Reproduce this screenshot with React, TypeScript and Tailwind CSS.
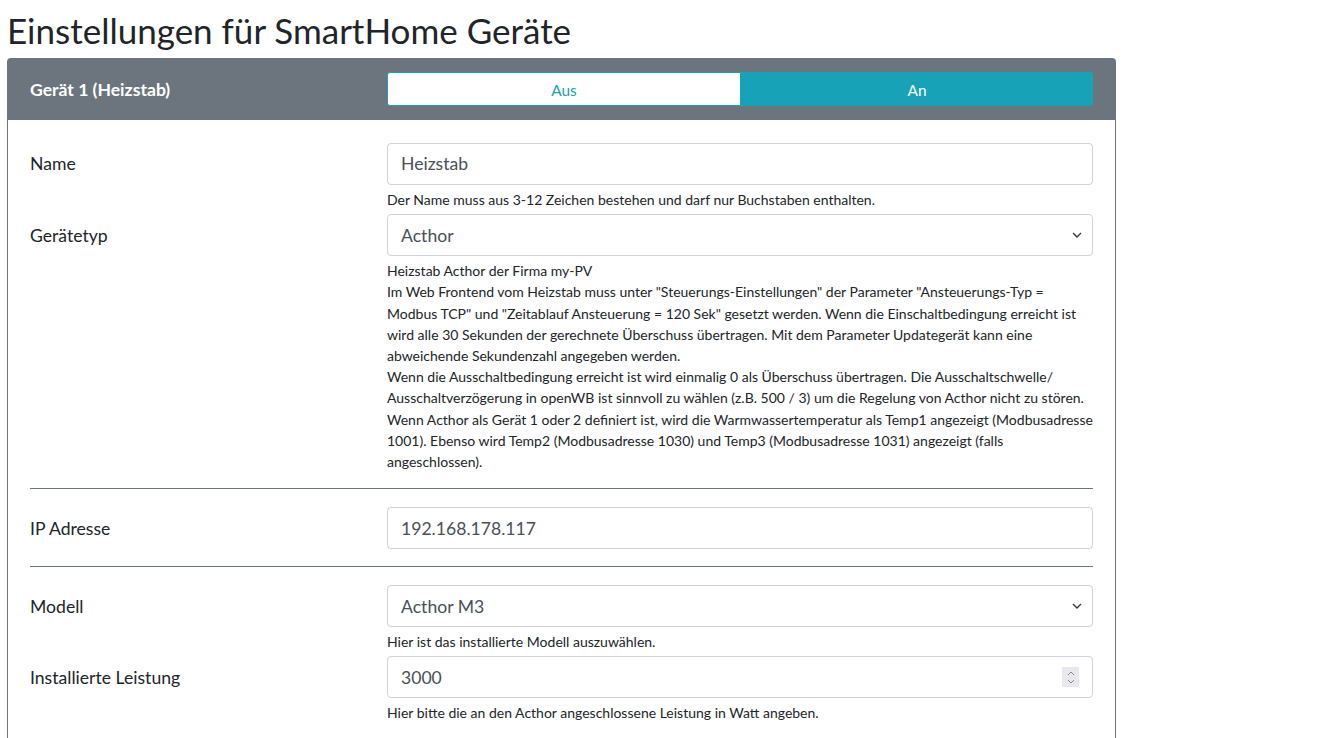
import React from "react";

const helpLines = [
  "Heizstab Acthor der Firma my-PV",
  'Im Web Frontend vom Heizstab muss unter "Steuerungs-Einstellungen" der Parameter "Ansteuerungs-Typ =',
  'Modbus TCP" und "Zeitablauf Ansteuerung = 120 Sek" gesetzt werden. Wenn die Einschaltbedingung erreicht ist',
  "wird alle 30 Sekunden der gerechnete Überschuss übertragen. Mit dem Parameter Updategerät kann eine",
  "abweichende Sekundenzahl angegeben werden.",
  "Wenn die Ausschaltbedingung erreicht ist wird einmalig 0 als Überschuss übertragen. Die Ausschaltschwelle/",
  "Ausschaltverzögerung in openWB ist sinnvoll zu wählen (z.B. 500 / 3) um die Regelung von Acthor nicht zu stören.",
  "Wenn Acthor als Gerät 1 oder 2 definiert ist, wird die Warmwassertemperatur als Temp1 angezeigt (Modbusadresse",
  "1001). Ebenso wird Temp2 (Modbusadresse 1030) und Temp3 (Modbusadresse 1031) angezeigt (falls",
  "angeschlossen).",
];

function Chevron() {
  return (
    <svg width="10" height="6" viewBox="0 0 10 6" className="shrink-0">
      <path d="M1 1l4 4 4-4" fill="none" stroke="#343a40" strokeWidth="1.4" />
    </svg>
  );
}

function Field({ value, kind }: { value: string; kind?: "select" | "number" }) {
  return (
    <div className="h-[42px] flex items-center justify-between rounded-[4px] border border-[#ced4da] bg-white pl-[13px] pr-[10px] text-[17.6px] text-[#495057]">
      <span className="pt-[1px]">{value}</span>
      {kind === "select" && <Chevron />}
      {kind === "number" && (
        <div className="w-[17px] h-[20px] mr-[3px] bg-[#e9e9ed] flex flex-col items-center justify-center gap-[3px]">
          <svg width="8" height="5" viewBox="0 0 8 5">
            <path d="M1 4l3-3 3 3" fill="none" stroke="#8a8a8a" strokeWidth="1" />
          </svg>
          <svg width="8" height="5" viewBox="0 0 8 5">
            <path d="M1 1l3 3 3-3" fill="none" stroke="#8a8a8a" strokeWidth="1" />
          </svg>
        </div>
      )}
    </div>
  );
}

function Row({
  label,
  children,
}: {
  label: string;
  children: React.ReactNode;
}) {
  return (
    <div className="grid grid-cols-[357px_1fr]">
      <div className="h-[42px] pt-[1px] flex items-center text-[17.6px] text-[#212529]">{label}</div>
      <div>{children}</div>
    </div>
  );
}

function Help({ children }: { children: React.ReactNode }) {
  return <div className="mt-[4px] text-[14px] leading-[21.2px] text-[#212529]">{children}</div>;
}

export default function App() {
  return (
    <div className="min-h-screen bg-white font-['Lato','Liberation_Sans',sans-serif] pl-[7px]">
      <h2 className="pt-[9px] text-[35px] leading-[42px] mb-[7px] text-[#212529] font-normal">
        Einstellungen für SmartHome Geräte
      </h2>
      <div className="w-[1109px] rounded-t-[4px] border border-b-0 border-[#6c757d]">
        {/* Header */}
        <div className="bg-[#6c757d] px-[22px] pt-[13px] pb-[14px] grid grid-cols-[357px_1fr] items-center">
          <span className="pt-[3px] text-white font-bold text-[17.6px]">Gerät 1 (Heizstab)</span>
          <div className="flex h-[34px] text-[15.4px]">
            <button className="flex-1 pt-[3px] bg-white border border-[#17a2b8] rounded-l-[3px] text-[#17a2b8]">
              Aus
            </button>
            <button className="flex-1 pt-[3px] bg-[#17a2b8] rounded-r-[3px] text-white">An</button>
          </div>
        </div>

        {/* Body */}
        <div className="px-[22px] pt-[23px] pb-[20px]">
          <Row label="Name">
            <Field value="Heizstab" />
            <Help>Der Name muss aus 3-12 Zeichen bestehen und darf nur Buchstaben enthalten.</Help>
          </Row>
          <div className="mt-[4px]">
            <Row label="Gerätetyp">
              <Field value="Acthor" kind="select" />
              <Help>
                {helpLines.map((l, i) => (
                  <div key={i} className="whitespace-nowrap">{l}</div>
                ))}
              </Help>
            </Row>
          </div>
          <hr className="mt-[16px] mb-[18px] border-t border-[#6c757d]" />
          <Row label="IP Adresse">
            <Field value="192.168.178.117" />
          </Row>
          <hr className="mt-[17px] mb-[18px] border-t border-[#6c757d]" />
          <Row label="Modell">
            <Field value="Acthor M3" kind="select" />
            <Help>Hier ist das installierte Modell auszuwählen.</Help>
          </Row>
          <div className="mt-[4px]">
            <Row label="Installierte Leistung">
              <Field value="3000" kind="number" />
              <Help>Hier bitte die an den Acthor angeschlossene Leistung in Watt angeben.</Help>
            </Row>
          </div>
        </div>
      </div>
    </div>
  );
}
